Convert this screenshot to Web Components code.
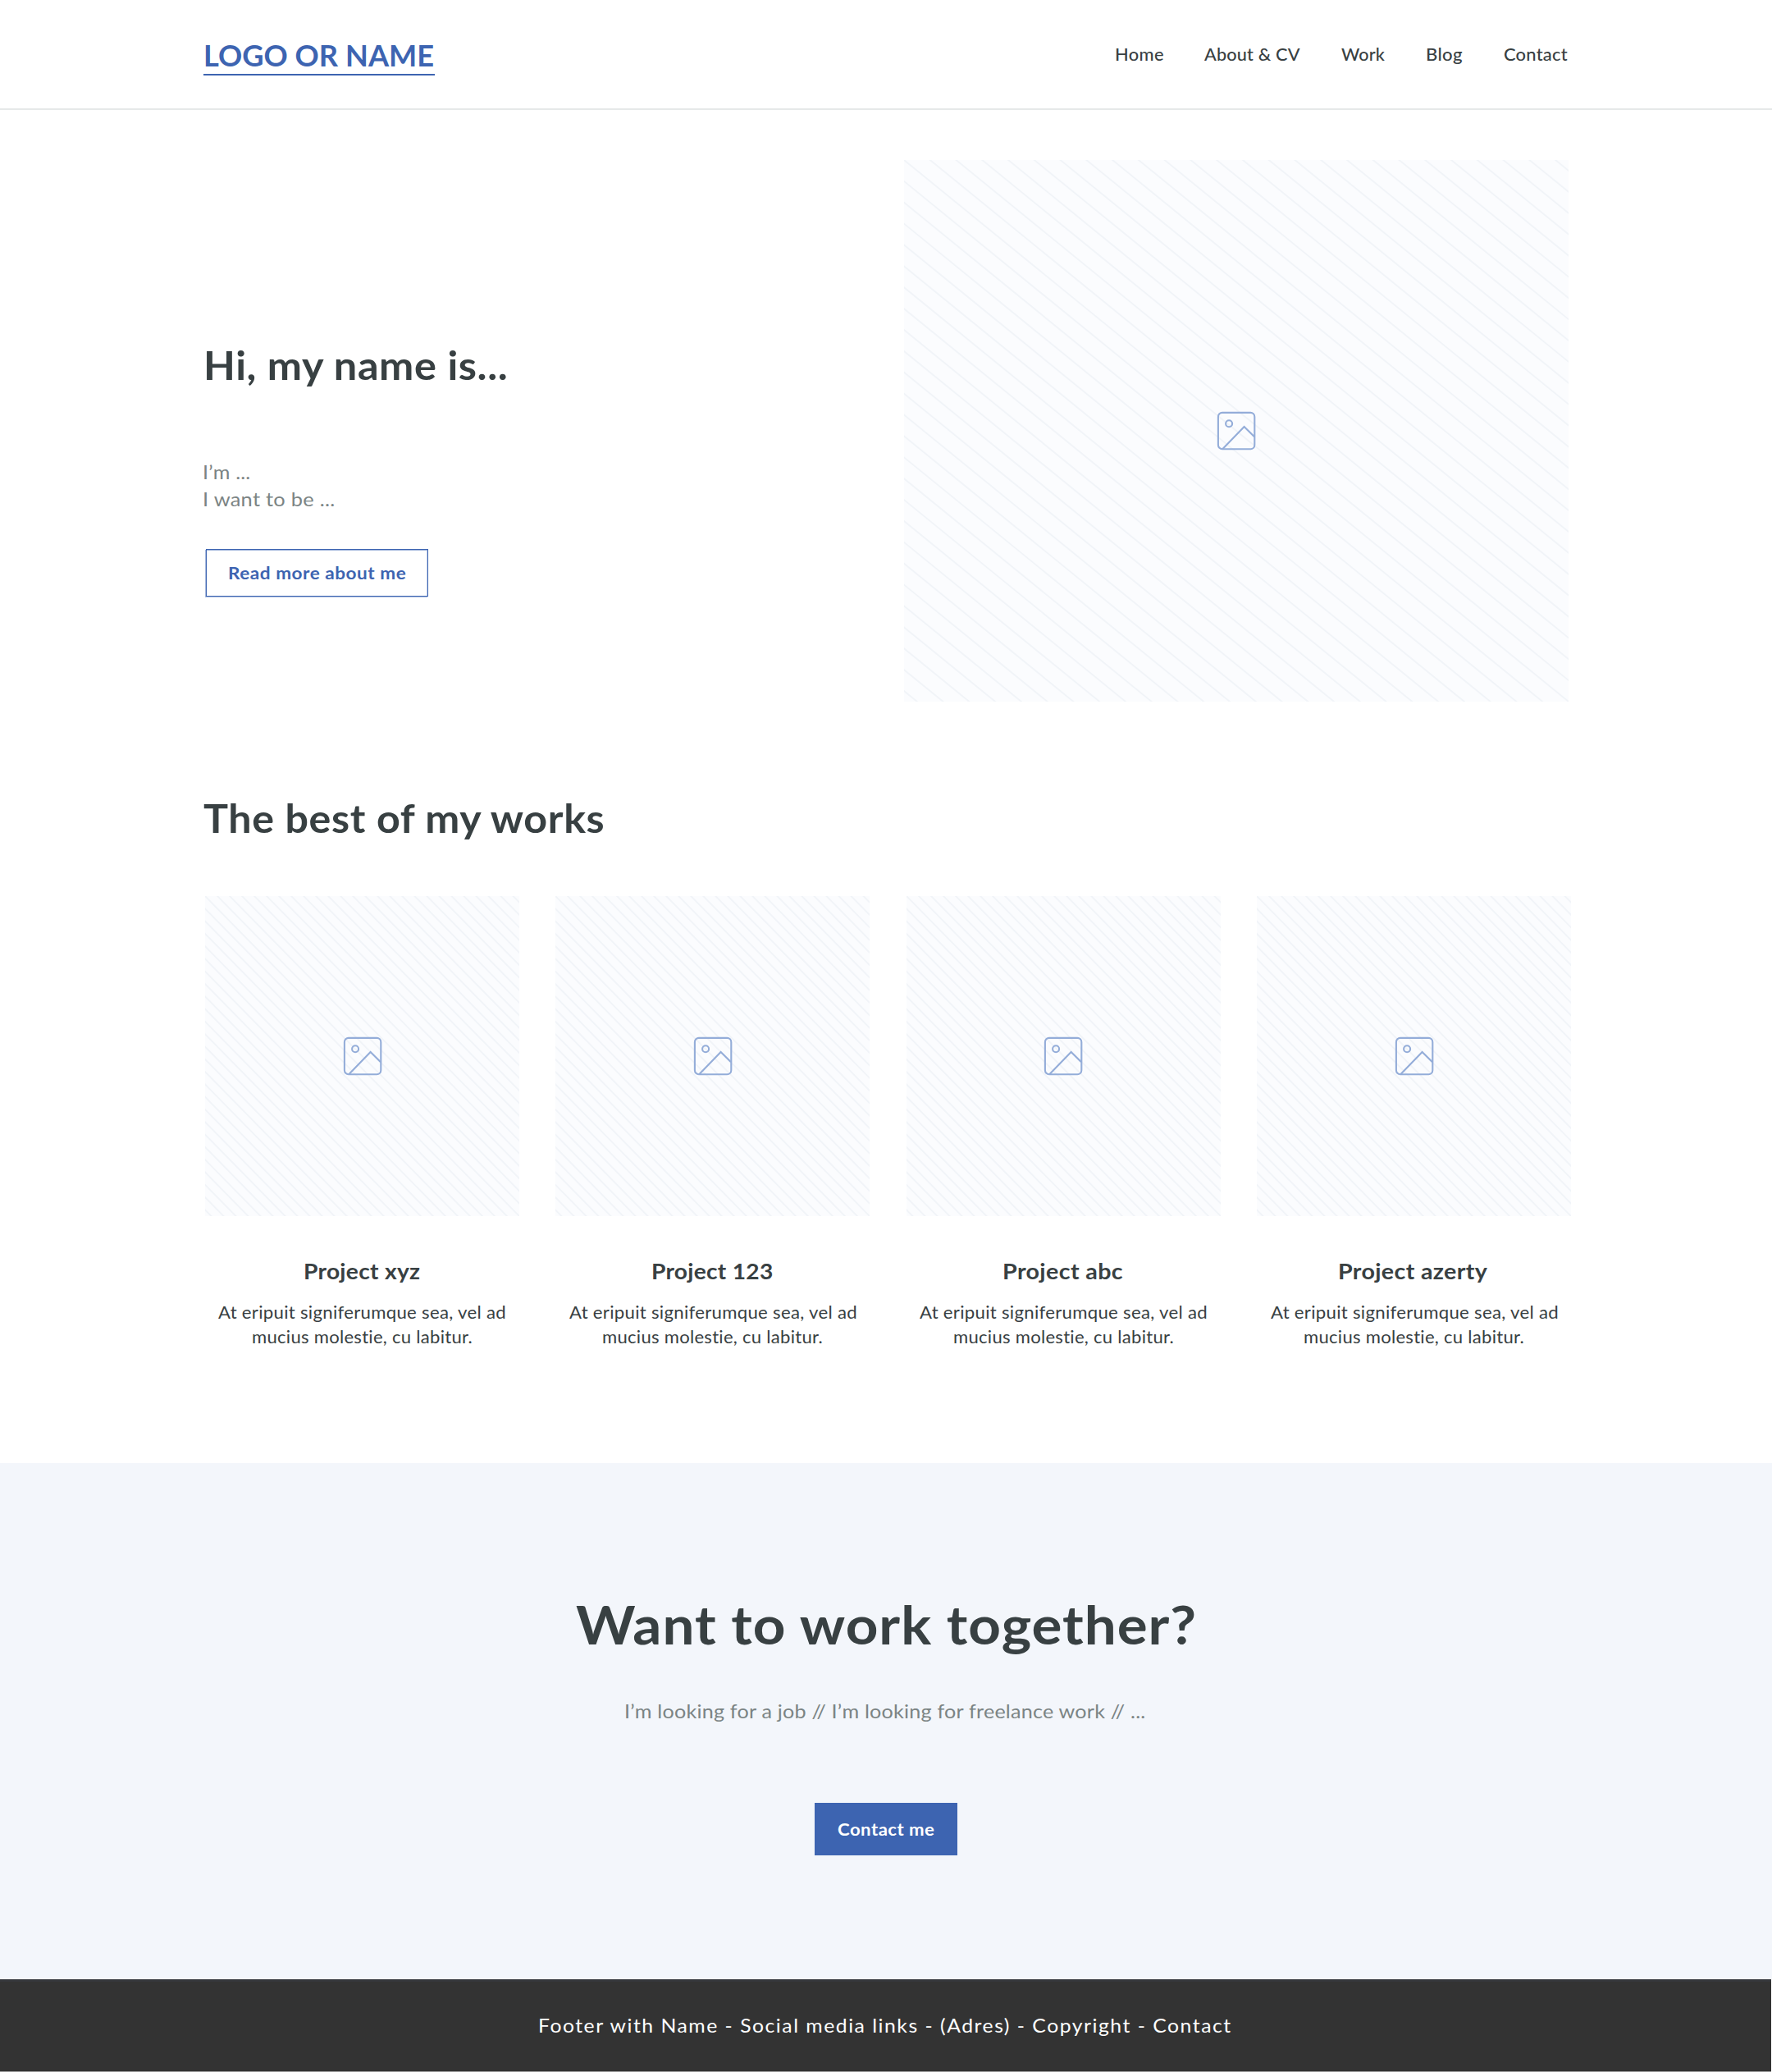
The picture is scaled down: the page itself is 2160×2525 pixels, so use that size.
<!DOCTYPE html>
<html lang="en">
<head>
<meta charset="utf-8">
<title>Portfolio</title>
<style>
html,body{margin:0;padding:0;background:#fff}
body{font-family:Lato,"Open Sans",sans-serif;color:#384042;width:2160px;overflow-x:hidden}
</style>
</head>
<body>
<portfolio-page></portfolio-page>
<script>
const define = (name, html, setup) => customElements.define(name, class extends HTMLElement {
  connectedCallback() {
    if (this.shadowRoot) return;
    const t = document.createElement('template');
    t.innerHTML = html;
    this.attachShadow({mode: 'open'}).append(t.content.cloneNode(true));
    if (setup) setup.call(this, this.shadowRoot);
  }
});

/* One line of text whose ink spans the given width: part by tracking, the rest by widening the letters. */
define('fit-text', `<style>
:host{display:block;white-space:nowrap}
span{display:block;width:max-content;transform-origin:0 50%}
</style><span><slot></slot></span>`, function (root) {
  const w = +this.getAttribute('width'), s = this.textContent.trim(), cs = getComputedStyle(this);
  const share = +(this.getAttribute('tracking') || 0.3);
  const ctx = document.createElement('canvas').getContext('2d');
  ctx.font = cs.fontWeight + ' ' + cs.fontSize + ' ' + cs.fontFamily;
  const m = ctx.measureText(s), span = root.querySelector('span');
  const ink = m.actualBoundingBoxLeft + m.actualBoundingBoxRight;
  const extra = (w - ink) * share, scale = w / (ink + extra);
  this.style.width = w + 'px';
  span.style.letterSpacing = (extra / (s.length - 1)).toFixed(3) + 'px';
  span.style.transform = `scaleX(${scale.toFixed(4)})`;
  span.style.marginLeft = (m.actualBoundingBoxLeft * scale).toFixed(2) + 'px';
});

/* Hatched placeholder: 25.5 stripes across and down, parallel to the diagonal. */
define('image-placeholder', `<style>
:host{display:grid;background:#fbfcfe;overflow:hidden}
svg{grid-area:1/1;display:block}
.hatch{width:100%;height:100%;min-width:0;min-height:0}
.icon{place-self:center}
</style>
<svg class="hatch" viewBox="0 0 25.5 25.5" preserveAspectRatio="none"><path fill="none" stroke="#f1f4f8" stroke-width="1.9" vector-effect="non-scaling-stroke"/></svg>
<svg class="icon" width="48" height="48" viewBox="0 0 48 48" fill="none" stroke="#94add9" stroke-width="2.1"><rect x="1.9" y="1.9" width="44.4" height="44.4" rx="5"/><circle cx="15.1" cy="15.3" r="4"/><path d="M7.2 46.3 L33.6 19 L46 31.2"/></svg>`, function (root) {
  let d = '';
  for (let k = -25; k <= 25; k++) d += `M${k - 1} -1L${k + 27} 27`;
  root.querySelector('.hatch path').setAttribute('d', d);
});

define('nav-link', `<style>
:host{display:block;font-size:21px;line-height:26px;font-weight:500}
</style><slot></slot>`);

define('site-header', `<style>
:host{display:flex;justify-content:space-between;align-items:flex-start;box-sizing:border-box;height:134px;padding:46px 249.4px 0 247.5px;border-bottom:2px solid #e6e9e9}
.logo{box-sizing:border-box;width:282.5px;padding:0 0 2px 2.5px;border-bottom:2px solid #3d64b1;color:#3d64b1;font-size:36px;line-height:42px;font-weight:700}
nav{display:flex;padding-top:7px}
</style>
<div class="logo"><fit-text width="278.4">LOGO OR NAME</fit-text></div>
<nav>
<nav-link style="margin-right:49.2px"><fit-text width="58.3">Home</fit-text></nav-link>
<nav-link style="margin-right:49.9px"><fit-text width="117.1">About &amp; CV</fit-text></nav-link>
<nav-link style="margin-right:51px"><fit-text width="53.1">Work</fit-text></nav-link>
<nav-link style="margin-right:50.5px"><fit-text width="43.4">Blog</fit-text></nav-link>
<nav-link><fit-text width="78.1">Contact</fit-text></nav-link>
</nav>`);

define('action-button', `<style>
:host{display:flex;justify-content:center;align-items:center;box-sizing:border-box;font-size:20.5px;line-height:26px;font-weight:700}
:host([kind=outline]){width:271px;height:58px;border:1px solid #3d64b1;box-shadow:-1px 1px #a9bbde,inset 0 1px #9eb2da,inset -1px 0 #c5d1e9;color:#3d64b1}
:host([kind=solid]){width:174px;height:63.6px;background:#3d64b1;color:#fff}
</style><slot></slot>`);

define('hero-section', `<style>
:host{display:flex;justify-content:space-between;padding:61px 248px 0 248px}
.copy{padding-top:220px}
h1{margin:0 0 82.8px;padding-left:3.2px;font-size:47.5px;line-height:60px;font-weight:700}
.intro{padding-left:1.5px;font-size:24px;line-height:33.3px;color:#7b8484;margin-bottom:44.6px}
action-button{margin-left:3px}
image-placeholder{width:810px;height:660px}
</style>
<div class="copy">
<h1><fit-text width="367.5">Hi, my name is...</fit-text></h1>
<div class="intro"><fit-text width="55.5">I’m ...</fit-text><fit-text width="159">I want to be ...</fit-text></div>
<action-button kind="outline"><fit-text width="215.7">Read more about me</fit-text></action-button>
</div>
<image-placeholder></image-placeholder>`);

define('project-card', `<style>
:host{display:flex;flex-direction:column;align-items:center;width:383px}
image-placeholder{width:100%;height:390px}
h3{margin:50px 0 17.7px;font-size:27px;line-height:34px;font-weight:700}
.text{display:flex;flex-direction:column;align-items:center;font-size:20.8px;line-height:30px}
</style>
<image-placeholder></image-placeholder>
<h3><slot></slot></h3>
<div class="text"><fit-text width="350.5">At eripuit signiferumque sea, vel ad</fit-text><fit-text width="267">mucius molestie, cu labitur.</fit-text></div>`);

define('works-section', `<style>
:host{display:block;box-sizing:border-box;height:928px;padding:112.3px 244.7px 0 250px}
h2{margin:0 0 64.7px -2px;font-size:47.5px;line-height:60px;font-weight:700}
.grid{display:flex;justify-content:space-between}
</style>
<h2><fit-text width="491">The best of my works</fit-text></h2>
<div class="grid">
<project-card><fit-text width="139.5">Project xyz</fit-text></project-card>
<project-card><fit-text width="145.5">Project 123</fit-text></project-card>
<project-card><fit-text width="144.5">Project abc</fit-text></project-card>
<project-card><fit-text width="180.5">Project azerty</fit-text></project-card>
</div>`);

define('contact-section', `<style>
:host{display:flex;flex-direction:column;align-items:center;box-sizing:border-box;height:629px;padding-top:155.8px;background:#f3f6fb}
h2{margin:0 0 48.9px;font-size:65px;line-height:80px;font-weight:700}
.sub{font-size:24px;line-height:34px;color:#7b8484;margin-bottom:95.3px}
</style>
<h2><fit-text width="755.5">Want to work together?</fit-text></h2>
<div class="sub"><fit-text width="634">I’m looking for a job // I’m looking for freelance work // ...</fit-text></div>
<action-button kind="solid"><fit-text width="118">Contact me</fit-text></action-button>`);

define('site-footer', `<style>
:host{display:flex;justify-content:center;box-sizing:border-box;height:113px;margin-right:1px;padding-top:35.7px;background:#333;color:#fff;border-top:3px solid #35373b;border-bottom:1px solid #999;font-size:24px;line-height:34px}
</style><fit-text width="843.5" tracking="0.8">Footer with Name - Social media links - (Adres) - Copyright - Contact</fit-text>`);

define('portfolio-page', `<style>:host{display:block}</style>
<site-header></site-header>
<main><hero-section></hero-section><works-section></works-section></main>
<contact-section></contact-section>
<site-footer></site-footer>`);
</script>
</body>
</html>
